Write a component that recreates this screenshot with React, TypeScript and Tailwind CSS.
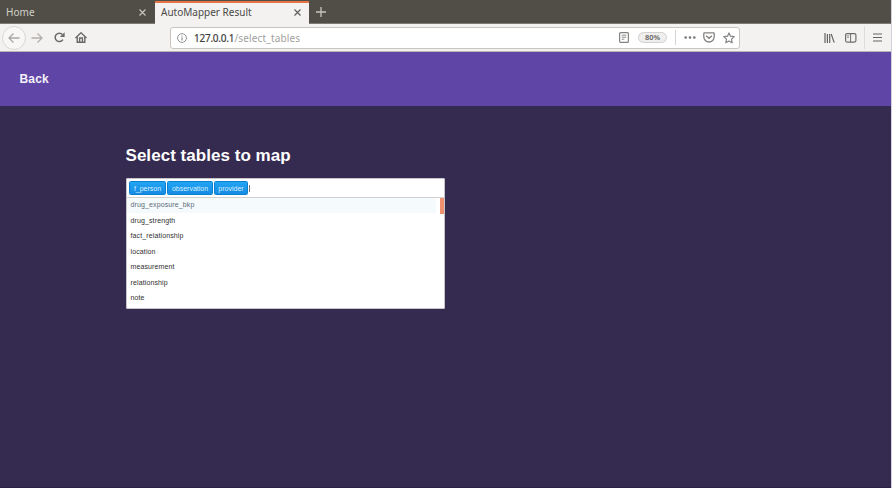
import React from 'react';

const selected = ['f_person', 'observation', 'provider'];
const tagWidths = ['w-[37px]', 'w-[46px]', 'w-[34px]'];
const options = [
  'drug_exposure_bkp',
  'drug_strength',
  'fact_relationship',
  'location',
  'measurement',
  'relationship',
  'note',
];

function Cross({ className }: { className: string }) {
  return (
    <svg className={className} width="7" height="7" viewBox="0 0 7 7" fill="none" stroke="currentColor" strokeWidth="1.2">
      <path d="M0.5 0.5 6.5 6.5M6.5 0.5 0.5 6.5" />
    </svg>
  );
}

function TabStrip() {
  return (
    <div className="flex h-[24px] shrink-0 bg-[#504e47] text-[10px]">
      <div className="flex w-[155px] items-center border-b border-[#7d7a74] pl-[6px] pr-[9px] pt-[2px] text-[#d3d0c8]">
        <span className="tracking-[0.05px]">Home</span>
        <Cross className="ml-auto text-[#c5c2bb]" />
      </div>
      <div className="mt-px flex w-[154px] items-center border-t-2 border-[#e67346] bg-[#f4f2f0] pr-[8px] pb-[2px] pl-[6px] text-[#4a4a48]">
        <span className="whitespace-nowrap">AutoMapper Result</span>
        <Cross className="ml-auto text-[#605f5c]" />
      </div>
      <div className="flex grow items-center border-b border-[#7d7a74] pl-[7px] pt-px text-[#c9c6be]">
        <svg width="10" height="10" viewBox="0 0 10 10" stroke="currentColor" strokeWidth="1.3">
          <path d="M5 0v10M0 5h10" />
        </svg>
      </div>
    </div>
  );
}

function Toolbar() {
  return (
    <div className="flex h-[28px] shrink-0 items-center border-b border-[#b9b5b5] bg-[#f4f2f0]">
      <div className="ml-[2px] flex size-[24px] shrink-0 items-center justify-center rounded-full border border-[#dad7d4] bg-[#f8f7f6] text-[#aaa8a5]">
        <svg width="12" height="10" viewBox="0 0 12 10" fill="none" stroke="currentColor" strokeWidth="1.3">
          <path d="M11.5 5H1M5.5 0.5 1 5l4.500 4.500" />
        </svg>
      </div>
      <svg className="ml-[5px] shrink-0 text-[#b1afac]" width="12" height="10" viewBox="0 0 12 10" fill="none" stroke="currentColor" strokeWidth="1.3">
        <path d="M0.500 5H11M6.500 0.500 11 5 6.500 9.500" />
      </svg>
      <svg className="ml-[11px] shrink-0 text-[#6a6967]" width="11" height="11" viewBox="0 0 11 11" fill="none" stroke="currentColor" strokeWidth="1.5">
        <path d="M8.900 7.700A4.200 4.200 0 1 1 8.500 2.600" />
        <path d="M10.600 0.300V5H5.900z" fill="currentColor" stroke="none" />
      </svg>
      <svg className="ml-[10px] shrink-0 text-[#6a6967]" width="12" height="11" viewBox="0 0 12 11" fill="none" stroke="currentColor" strokeWidth="1.4">
        <path d="M0.500 6 6 0.800 11.500 6M2.200 5v5.300h7.600V5" />
        <path d="M4.600 10V6h2.800v4" />
      </svg>
      <div className="ml-[83px] flex h-[22px] w-[570px] shrink-0 items-center rounded-[3px] border border-[#c9c5c2] bg-white">
        <svg className="ml-[6px] shrink-0 text-[#8b8987]" width="10" height="10" viewBox="0 0 10 10" fill="none" stroke="currentColor">
          <circle cx="5" cy="5" r="4.400" strokeWidth="0.9" />
          <path d="M5 4.300v3.200M5 2.400v1.100" strokeWidth="1.100" />
        </svg>
        <div className="mt-px ml-[7px] text-[10px] whitespace-nowrap">
          <span className="inline-block w-[40.500px] tracking-[-0.25px] text-[#3d3c3a] [-webkit-text-stroke:0.2px_#3d3c3a]">127.0.0.1</span>
          <span className="tracking-[0.15px] text-[#a29f9d]">/select_tables</span>
        </div>
        <svg className="mr-px ml-auto shrink-0 text-[#858381]" width="10" height="11" viewBox="0 0 10 11" fill="none" stroke="currentColor">
          <rect x="0.600" y="0.600" width="8.800" height="9.800" rx="1" strokeWidth="1.200" />
          <path d="M2.700 3.200h4.600M2.700 5.200h4.600M2.700 7.200h2.600" strokeWidth="0.900" />
        </svg>
        <div className="ml-[8px] flex h-[11px] w-[29px] items-center justify-center rounded-full border border-[#d3d1cf] bg-[#efeeed] text-[7.500px] leading-none font-semibold text-[#62605e]">
          80%
        </div>
        <div className="ml-[8px] h-[15px] w-px bg-[#d6d3d1]" />
        <svg className="ml-[8px] shrink-0 text-[#777573]" width="12" height="3" viewBox="0 0 12 3" fill="currentColor">
          <circle cx="1.700" cy="1.500" r="1.300" />
          <circle cx="6" cy="1.500" r="1.300" />
          <circle cx="10.300" cy="1.500" r="1.300" />
        </svg>
        <svg className="ml-[7px] shrink-0 text-[#858381]" width="12" height="11" viewBox="0 0 12 11" fill="none" stroke="currentColor" strokeWidth="1.300">
          <path d="M1.500 0.800h9q.700 0 .700.700v3.300a5.200 5.200 0 0 1-10.400 0V1.500q0-.7.7-.7z" />
          <path d="M3.200 3.700 6 6.300l2.800-2.600" strokeWidth="1.500" />
        </svg>
        <svg className="mr-[4px] ml-[8px] shrink-0 text-[#858381]" width="12" height="12" viewBox="0 0 12 12" fill="none" stroke="currentColor" strokeWidth="1.200" strokeLinejoin="round">
          <path d="m6 .9 1.500 3.300 3.700.4-2.700 2.500.7 3.700L6 9l-3.200 1.800.7-3.700L.8 4.600l3.700-.4z" />
        </svg>
      </div>
      <svg className="ml-[84px] shrink-0 text-[#666462]" width="11" height="10" viewBox="0 0 11 10" fill="none" stroke="currentColor" strokeWidth="1.200">
        <path d="M1 0v10M3.400 1v9M5.700 1v9M7.200 1l3 8.600" />
      </svg>
      <svg className="ml-[10px] shrink-0 text-[#6e6c6a]" width="12" height="10" viewBox="0 0 12 10" fill="none" stroke="currentColor">
        <rect x="0.600" y="0.600" width="10.300" height="8.500" rx="1.500" strokeWidth="1.200" />
        <path d="M5.600 1v8" strokeWidth="1" />
        <path d="M2 2.800h2M2 4.300h2" strokeWidth="0.700" />
      </svg>
      <div className="ml-[7px] h-[23px] w-px bg-[#dedbd9]" />
      <svg className="ml-[8px] shrink-0 text-[#666462]" width="9" height="9" viewBox="0 0 9 9" fill="none" stroke="currentColor" strokeWidth="1.200">
        <path d="M0.500 1h8M0.500 4.500h8M0.500 8h8" strokeLinecap="round" />
      </svg>
    </div>
  );
}

function TableSelect() {
  return (
    <div className="flex h-[131px] w-[319px] flex-col rounded-[1px] border border-[#c7c5ca] bg-white font-['Liberation_Sans',Arial,sans-serif] text-[7px]">
      <div className="flex h-[19px] shrink-0 items-center gap-px border-b border-[#d0d0d0] pl-[2px]">
        {selected.map((name, i) => (
          <div
            key={name}
            className={`flex h-[14px] items-center justify-center rounded-[1.500px] border border-[#0b7fd0] bg-linear-to-b from-[#22a5f3] to-[#168be3] leading-none text-[#d9efff] ${tagWidths[i]}`}
          >
            {name}
          </div>
        ))}
        <div className="h-[7px] w-px bg-[#777]" />
      </div>
      <div className="flex grow">
        <div className="w-[309px] tracking-[0.120px]">
          {options.map((name, i) => (
            <div
              key={name}
              className={
                i === 0
                  ? 'flex h-[15.430px] items-center bg-[#f5fafd] pl-[3.500px] text-[#5b6c7b]'
                  : 'flex h-[15.430px] items-center pl-[3.500px] text-[#303030]'
              }
            >
              {name}
            </div>
          ))}
        </div>
        <div className="ml-auto h-[16px] w-[4px] bg-[#ef916e]" />
      </div>
    </div>
  );
}

export default function App() {
  return (
    <div className="flex h-[488px] w-[892px] flex-col overflow-hidden border-r border-[#d5d0de] bg-[#352a50] font-['Noto_Sans','Open_Sans',sans-serif]">
      <TabStrip />
      <Toolbar />
      <header className="flex h-[54px] shrink-0 items-center bg-[#5f45a5] pl-[19.500px] font-['Liberation_Sans',Arial,sans-serif] text-[12px] font-bold tracking-[0.200px] text-[#f3f0fa]">
        <span className="pb-px">Back</span>
      </header>
      <main className="grow border-b border-[#2b2144] pt-[40px] pl-[126px]">
        <h1 className="mb-[12px] -ml-[0.500px] h-[20px] font-['Liberation_Sans',Arial,sans-serif] text-[17px] leading-[20px] font-bold tracking-[0.040px] whitespace-nowrap text-white">
          Select tables to map
        </h1>
        <TableSelect />
      </main>
    </div>
  );
}
